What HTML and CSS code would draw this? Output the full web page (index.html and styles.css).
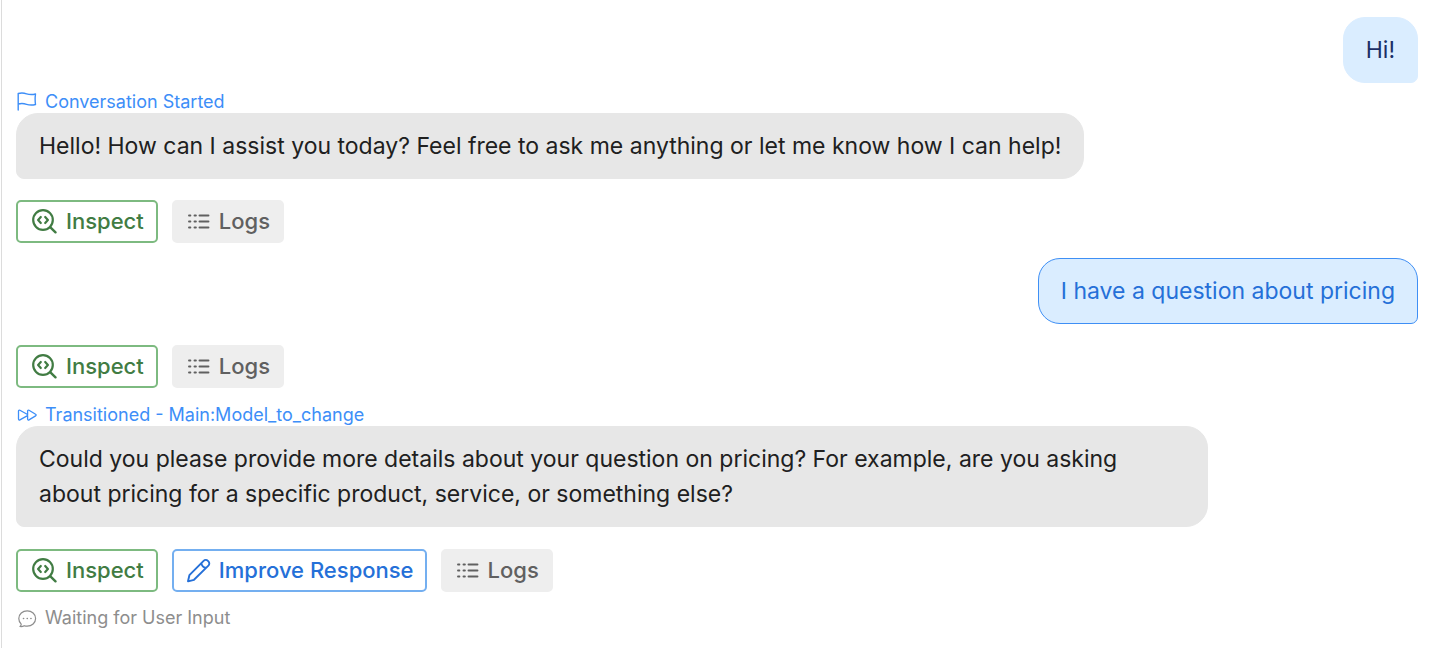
FILE: index.html
```html
<!DOCTYPE html>
<html lang="en">
<head>
<meta charset="utf-8">
<meta name="viewport" content="width=device-width, initial-scale=1">
<title>Conversation</title>
<link rel="stylesheet" href="styles.css">
</head>
<body>
<svg class="sprite" aria-hidden="true">
  <symbol id="inspect" viewBox="0 0 26 26">
    <circle cx="12" cy="12" r="9.800" stroke-width="2.2"/>
    <path d="M19.4 19.300 24.500 24.300" stroke-width="2.4"/>
    <path d="M9.800 9 7.100 12l2.700 3M14.200 9l2.700 3-2.700 3" stroke-width="2.200"/>
  </symbol>
  <symbol id="logs" viewBox="0 0 26 26">
    <path d="M3 7.500h1.400M8.500 7.500h1.400M13.500 7.500h9M3 13.500h1.400M8.500 13.500h1.400M13.500 13.500h9M3 19.500h1.400M8.500 19.500h1.400M13.500 19.500h9" stroke-width="1.900"/>
  </symbol>
  <symbol id="pencil" viewBox="0 0 26 26">
    <path d="M2 24.300 3.400 18.200 17.600 3.800a3 3 0 0 1 4.300 0l.5.500a3 3 0 0 1 0 4.300L8 22.800ZM15.300 6.100c.4 2.700 2 4.300 4.800 4.800" stroke-width="1.900"/>
  </symbol>
  <symbol id="flag" viewBox="0 0 20 20">
    <path d="M1.200 18V1.500c2.800-.7 5.600-.6 8.400.3 2.800.9 5.600 1 8.900.2-.5 3.500-.5 7 0 10.500-3.300.8-6.100.7-8.900-.2-2.800-.9-5.600-1-8.400-.3" stroke-width="1.400"/>
  </symbol>
  <symbol id="forward" viewBox="0 0 20 20">
    <path d="M1.500 6.100c0-.8.700-1.200 1.400-.8l7.200 4c.7.400.7 1.200 0 1.600l-7.200 4c-.7.400-1.400 0-1.400-.8ZM10.600 9.500V6.100c0-.8.700-1.200 1.400-.8l6.600 4c.7.400.7 1.200 0 1.600l-6.600 4c-.7.400-1.400 0-1.400-.8v-3.400" stroke-width="1.300"/>
  </symbol>
  <symbol id="chat" viewBox="0 0 20 20">
    <path d="M4.200 16.200C2.700 14.700 1.800 12.600 1.800 10.500c0-4.300 3.800-7.700 8.400-7.700s8.400 3.400 8.400 7.700-3.800 7.700-8.400 7.700c-1.100 0-2.100-.2-3-.5-1.200.8-2.700 1.100-4.200.8.800-.7 1.200-1.500 1.200-2.300Z" stroke-width="1.200"/>
    <path d="M6.500 10.500h.1M10.200 10.500h.1M13.900 10.500h.1" stroke-width="1.600"/>
  </symbol>
</svg>
<main class="chat">
  <p class="bubble user">Hi!</p>
  <p class="event first"><svg class="small-icon"><use href="#flag"/></svg>Conversation Started</p>
  <p class="bubble agent">Hello! How can I assist you today? Feel free to ask me anything or let me know how I can help!</p>
  <div class="actions">
    <button type="button" class="btn inspect"><svg class="icon"><use href="#inspect"/></svg>Inspect</button>
    <button type="button" class="btn logs"><svg class="icon"><use href="#logs"/></svg>Logs</button>
  </div>
  <p class="bubble user selected">I have a question about pricing</p>
  <div class="actions">
    <button type="button" class="btn inspect"><svg class="icon"><use href="#inspect"/></svg>Inspect</button>
    <button type="button" class="btn logs"><svg class="icon"><use href="#logs"/></svg>Logs</button>
  </div>
  <p class="event"><svg class="small-icon"><use href="#forward"/></svg>Transitioned - Main:Model_to_change</p>
  <p class="bubble agent">Could you please provide more details about your question on pricing? For example, are you asking about pricing for a specific product, service, or something else?</p>
  <div class="actions">
    <button type="button" class="btn inspect"><svg class="icon"><use href="#inspect"/></svg>Inspect</button>
    <button type="button" class="btn improve"><svg class="icon"><use href="#pencil"/></svg>Improve Response</button>
    <button type="button" class="btn logs"><svg class="icon"><use href="#logs"/></svg>Logs</button>
  </div>
  <p class="event waiting"><svg class="small-icon"><use href="#chat"/></svg>Waiting for User Input</p>
</main>
</body>
</html>
```
FILE: styles.css
```css
* {
  box-sizing: border-box;
}

body {
  margin: 0;
  background: #fff;
  font-family: Inter, "Liberation Sans", sans-serif;
}

p {
  margin: 0;
}

.sprite {
  position: absolute;
  width: 0;
  height: 0;
}

svg {
  flex: none;
  fill: none;
  stroke: currentColor;
  stroke-linecap: round;
  stroke-linejoin: round;
}

.chat {
  display: flex;
  flex-direction: column;
  align-items: flex-start;
  min-height: 100vh;
  padding: 17px 12px 0 14px;
  margin-left: 1px;
  border-left: 1px solid #dcdcdc;
}

.bubble {
  max-width: 85%;
  padding: 15px 22px 14px;
  border: 1px solid transparent;
  border-radius: 22px;
  font-size: 23px;
  line-height: 35px;
}

.agent {
  border-color: #e7e7e7;
  border-bottom-left-radius: 8px;
  background: #e7e7e7;
  color: #202020;
}

.user {
  align-self: flex-end;
  border-color: #daedff;
  border-bottom-right-radius: 7px;
  background: #daedff;
  color: #1b2f66;
}

.selected {
  border-color: #3e8ff5;
  color: #2570d8;
}

.event {
  display: flex;
  align-items: center;
  gap: 8px;
  padding-left: 1px;
  color: #3d8ef8;
  font-size: 18px;
  line-height: 22px;
}

.event.first {
  margin-top: 8px;
}

.waiting {
  color: #8d8d8d;
}

.small-icon {
  width: 20px;
  height: 20px;
}

.actions {
  display: flex;
  flex-wrap: wrap;
  gap: 14px;
  margin: 21px 0 15px;
}

.actions:has(+ .event) {
  margin-bottom: 16px;
}

.actions:has(.improve) {
  margin: 22px 0 15px;
}

.btn {
  display: flex;
  align-items: center;
  gap: 8px;
  height: 43px;
  padding: 0 12px 2px;
  border: 2px solid;
  border-radius: 5px;
  background: #fff;
  font: 500 22px/26px Inter, "Liberation Sans", sans-serif;
}

.icon {
  width: 26px;
  height: 26px;
}

.inspect {
  gap: 9px;
  padding-left: 13px;
  border-color: #7dba80;
  color: #417c43;
}

.improve {
  gap: 7px;
  padding-right: 11px;
  border-color: #74aff0;
  color: #2570d8;
}

.logs {
  gap: 7px;
  border-color: #eee;
  background: #eee;
  color: #606060;
}
```
